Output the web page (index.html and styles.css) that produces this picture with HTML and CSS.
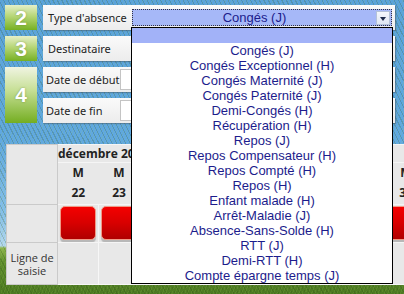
FILE: index.html
```html
<!DOCTYPE html>
<html>
    <head>
        <meta charset="utf-8">
        <title>Saisie d'absence</title>
        <link rel="stylesheet" href="styles.css">
    </head>
    <body>
        <div class="steps">
            <div class="step">
                <div class="num">2</div>
                <div class="rows">
                    <div class="row">
                        <span class="label wide">Type d'absence</span>
                        <div class="select">
                            <span class="value">Congés (J)</span>
                            <span class="arrow"></span>
                        </div>
                    </div>
                </div>
            </div>
            <div class="step">
                <div class="num">3</div>
                <div class="rows">
                    <div class="row"><span class="label wide">Destinataire</span></div>
                </div>
            </div>
            <div class="step">
                <div class="num tall">4</div>
                <div class="rows">
                    <div class="row"><span class="label">Date de début</span><span class="input"></span></div>
                    <div class="row"><span class="label">Date de fin</span><span class="input"></span></div>
                </div>
            </div>
        </div>

        <table class="planning">
            <colgroup>
                <col class="head-col">
                <col class="day-col"><col class="day-col"><col class="day-col"><col class="day-col"><col class="day-col">
                <col class="day-col"><col class="day-col"><col class="day-col"><col class="day-col"><col class="day-col">
            </colgroup>
            <tr class="months">
                <td class="corner" rowspan="2"></td>
                <td class="month" colspan="10">décembre 2015</td>
            </tr>
            <tr class="days">
                <td>M<br>22</td><td>M<br>23</td><td>J<br>24</td><td>V<br>25</td><td>S<br>26</td>
                <td>D<br>27</td><td>L<br>28</td><td>M<br>29</td><td>M<br>30</td><td>J<br>31</td>
            </tr>
            <tr class="busy">
                <td class="rowhead"></td>
                <td><div class="red"></div></td><td><div class="red"></div></td><td><div class="red"></div></td>
                <td><div class="red"></div></td><td><div class="red"></div></td><td><div class="red"></div></td>
                <td><div class="red"></div></td><td><div class="red"></div></td><td><div class="red"></div></td>
                <td><div class="red"></div></td>
            </tr>
            <tr class="entry">
                <td class="rowhead">Ligne de<br>saisie</td>
                <td></td><td></td><td></td><td></td><td></td><td></td><td></td><td></td><td></td><td></td>
            </tr>
        </table>

        <ul class="dropdown">
            <li class="current"></li>
            <li>Congés (J)</li>
            <li>Congés Exceptionnel (H)</li>
            <li>Congés Maternité (J)</li>
            <li>Congés Paternité (J)</li>
            <li>Demi-Congés (H)</li>
            <li>Récupération (H)</li>
            <li>Repos (J)</li>
            <li>Repos Compensateur (H)</li>
            <li>Repos Compté (H)</li>
            <li>Repos (H)</li>
            <li>Enfant malade (H)</li>
            <li>Arrêt-Maladie (J)</li>
            <li>Absence-Sans-Solde (H)</li>
            <li>RTT (J)</li>
            <li>Demi-RTT (H)</li>
            <li>Compte épargne temps (J)</li>
        </ul>
    </body>
</html>
```

FILE: styles.css
```css
body {
    margin: 0;
    width: 404px;
    height: 294px;
    overflow: hidden;
    position: relative;
    font-family: "Noto Sans", sans-serif;
    background:
        repeating-linear-gradient(63deg, rgba(30,60,10,0.18) 0 1px, transparent 1px 4px),
        repeating-linear-gradient(-71deg, rgba(160,200,90,0.15) 0 1px, transparent 1px 3px),
        linear-gradient(to bottom, #58a2dd 0, #5fa8e2 140px, #86c0ec 215px, #b4d8f2 246px, #8db44c 248px, #5f8e2c 262px, #4c7a22 294px);
}

.steps {
    padding: 5px 0 0 5px;
}

.step {
    display: flex;
    gap: 6px;
    margin-bottom: 6px;
}

.num {
    width: 32px;
    height: 25px;
    background: linear-gradient(to bottom, #e6efc8 0%, #b6d676 45%, #76b024 100%);
    color: #ffffff;
    font-family: "Liberation Sans", Arial, sans-serif;
    font-weight: bold;
    font-size: 21px;
    line-height: 25px;
    text-align: center;
    text-shadow: 0 0 2px rgba(60,90,10,0.5);
}

.num.tall {
    height: 56px;
    line-height: 56px;
    background: linear-gradient(to bottom, #f0f4e2 0%, #c8e098 40%, #74ae22 100%);
}

.rows {
    display: flex;
    flex-direction: column;
    gap: 6px;
}

.row {
    width: 352px;
    height: 25px;
    display: flex;
    align-items: center;
    background: linear-gradient(to bottom, #fafafa 0%, #ececec 100%);
    box-shadow: 1px 1px 1px rgba(60,60,60,0.35);
}

.label {
    width: 74px;
    padding-left: 3px;
    font-size: 11px;
    color: #222222;
    white-space: nowrap;
}

.label.wide {
    width: 84px;
    padding-left: 5px;
}

.input {
    width: 260px;
    height: 19px;
    margin-left: 0;
    background: #ffffff;
    border: 1px solid #c4c4c4;
}

.select {
    width: 258px;
    height: 15px;
    position: relative;
    display: flex;
    align-items: center;
    background: #a6b8f8;
    border: 1px dotted #333344;
}

.select .value {
    flex: 1;
    text-align: center;
    font-family: "Liberation Sans", Arial, sans-serif;
    font-size: 13px;
    color: #1c1c8c;
}

.select .arrow {
    width: 14px;
    height: 14px;
    margin-right: 1px;
    position: relative;
    background: linear-gradient(to bottom, #f4f7fc, #dfe6f2);
    border: 1px solid #b4c2d8;
    box-sizing: border-box;
}

.select .arrow::after {
    content: "";
    position: absolute;
    left: 3px;
    top: 5px;
    border-left: 3.5px solid transparent;
    border-right: 3.5px solid transparent;
    border-top: 4px solid #1e2c4c;
}

.planning {
    border-collapse: collapse;
    margin: 21px 0 0 6px;
    width: 461px;
    table-layout: fixed;
    font-family: "Open Sans", sans-serif;
    font-size: 12px;
    color: #222222;
}

.head-col {
    width: 51px;
}

.day-col {
    width: 41px;
}

.planning td {
    padding: 0;
    background: #e8e8e8;
    border: 1px solid #f5f5f5;
}

.planning .corner,
.planning .rowhead {
    border: 1px solid #cacaca;
    text-align: center;
    color: #333333;
    font-size: 11px;
    line-height: 13px;
}

.months {
    height: 18px;
}

.planning .month {
    font-weight: bold;
    text-align: left;
    line-height: 16px;
    border-left: none;
    border-right: none;
}

.days {
    height: 42px;
}

.days td {
    font-weight: bold;
    text-align: center;
    line-height: 20px;
    padding-bottom: 1px;
    border-left: none;
    border-right: none;
}

.busy {
    height: 38px;
}

.red {
    width: 34px;
    height: 32px;
    margin: 0 0 2px 2px;
    border: 1px solid #f09a86;
    border-radius: 5px;
    background: linear-gradient(to bottom, #f40000 0%, #d80000 50%, #b00000 100%);
    box-shadow: 0 3px 1px #b8b8b8;
}

.entry {
    height: 42px;
}

.entry td {
    border: 1px solid #f7f7f7;
}

.entry td.rowhead {
    border: 1px solid #cacaca;
    padding-top: 1px;
}

.dropdown {
    position: absolute;
    left: 131px;
    top: 27px;
    width: 260px;
    margin: 0;
    padding: 0;
    list-style: none;
    background: #ffffff;
    border: 1px solid #000000;
    font-family: "Liberation Sans", Arial, sans-serif;
    font-size: 13px;
    line-height: 15px;
    color: #1c1c8c;
    text-align: center;
}

.dropdown li {
    height: 15px;
}

.dropdown li.current {
    background: #a2b2f8;
}
```
